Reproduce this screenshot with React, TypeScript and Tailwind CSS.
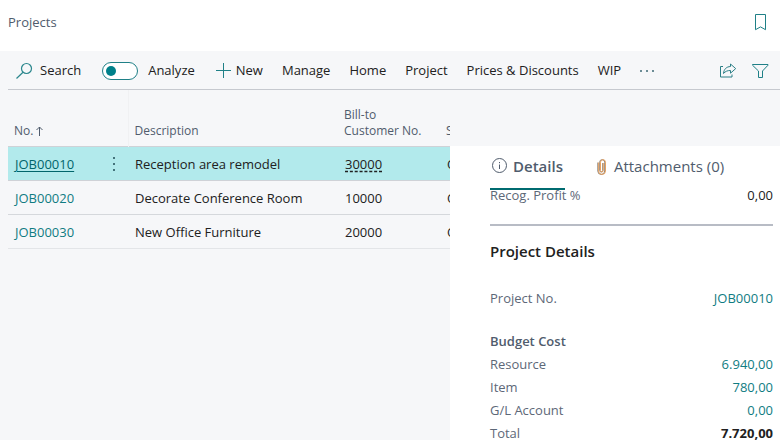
import React from "react";

const projects = [
  { no: "JOB00010", description: "Reception area remodel", customer: "30000", status: "Open" },
  { no: "JOB00020", description: "Decorate Conference Room", customer: "10000", status: "Open" },
  { no: "JOB00030", description: "New Office Furniture", customer: "20000", status: "Open" },
];

const menus = ["Manage", "Home", "Project", "Prices & Discounts", "WIP"];

const budget = [
  { label: "Resource", value: "6.940,00" },
  { label: "Item", value: "780,00" },
  { label: "G/L Account", value: "0,00" },
];

function SearchIcon() {
  return (
    <svg width="18" height="18" viewBox="0 0 18 18" fill="none" stroke="#2b878d" aria-hidden="true">
      <circle cx="10.500" cy="6.500" r="5" strokeWidth="1.2" />
      <path d="M7 10.200.500 16.500" strokeWidth="1.2" />
    </svg>
  );
}

function PlusIcon() {
  return (
    <svg width="16" height="16" viewBox="0 0 16 16" fill="none" stroke="#1f8087" aria-hidden="true">
      <path d="M0 7.500h15M7.500 0v15" />
    </svg>
  );
}

function BookmarkIcon() {
  return (
    <svg width="12" height="17" viewBox="0 0 12 17" fill="none" stroke="#1f8087" aria-hidden="true">
      <path d="M.5.5h10v15.200L5.500 12.900.500 15.700z" />
    </svg>
  );
}

function ShareIcon() {
  return (
    <svg width="17" height="16" viewBox="0 0 17 16" fill="none" stroke="#2b7f86" strokeLinejoin="round" aria-hidden="true">
      <path d="M3 3.500H.5v10.500h11.500V11.500" />
      <path d="M10.500 1v2.500C6.500 3.700 4 6 3.500 10.500c2-2.300 4-3 7-3v2.700L15.700 5.600z" />
    </svg>
  );
}

function FilterIcon() {
  return (
    <svg width="17" height="16" viewBox="0 0 17 16" fill="none" stroke="#1f8087" aria-hidden="true">
      <path d="M.5 1.500h15.500v.700L10.500 8v6.500h-4V8L.5 2.200z" />
    </svg>
  );
}

function InfoIcon() {
  return (
    <svg width="16" height="16" viewBox="0 0 16 16" fill="none" stroke="#505c6d" aria-hidden="true">
      <circle cx="7.500" cy="7.500" r="7" />
      <path d="M7.500 6.500V11M7.500 4v1.200" />
    </svg>
  );
}

function ClipIcon() {
  return (
    <svg width="10" height="16" viewBox="0 0 10 16" fill="none" aria-hidden="true">
      <path d="M.8 3.500v8.500a3.400 3.400 0 0 0 6.900 0V3.200a2.500 2.500 0 0 0-5 0v8.300a1.500 1.500 0 0 0 3 0V4" stroke="#8d8378" />
      <path d="M1.600 3.500v8.500a3 3 0 0 0 6.900 0V3.200a2.500 2.500 0 0 0-5 0v8.300a1.300 1.300 0 0 0 2.800 0V4" stroke="#e79a52" strokeWidth=".9" />
    </svg>
  );
}

function SortIcon() {
  return (
    <svg width="7" height="10" viewBox="0 0 7 10" fill="none" stroke="#505c6d" aria-hidden="true">
      <path d="M3.500 10V1M.5 4l3-3 3 3" />
    </svg>
  );
}

export default function App() {
  return (
    <div className="flex h-screen flex-col overflow-hidden bg-[#f6f7f9] font-['Open_Sans','Noto_Sans',sans-serif] text-[13px] text-[#212121]">
      <header className="flex h-[51px] shrink-0 items-center justify-between bg-white pr-[13px] pb-[6px] pl-2">
        <h1 className="text-[#505c6d]">Projects</h1>
        <button type="button" aria-label="Bookmark">
          <BookmarkIcon />
        </button>
      </header>

      <div className="shrink-0 pl-2">
        <div className="flex h-[39px] items-center border-b border-[#c6c9cf] pt-[2px] pr-[11px] pl-2">
          <button type="button" className="flex items-center gap-[6px]">
            <SearchIcon />
            Search
          </button>
          <label className="ml-[21px] flex items-center gap-[10px]">
            <input
              type="checkbox"
              role="switch"
              className="h-[18px] w-9 appearance-none rounded-full border border-[#1f8087] bg-white p-[3px] before:block before:size-[10px] before:rounded-full before:bg-[#00808a] checked:before:ml-[18px]"
            />
            Analyze
          </label>
          <button type="button" className="ml-[21px] flex items-center gap-1">
            <PlusIcon />
            New
          </button>
          <nav className="ml-[19px] flex items-center gap-[19px] whitespace-nowrap">
            {menus.map((menu) => (
              <button type="button" key={menu}>
                {menu}
              </button>
            ))}
            <button type="button" aria-label="More options" className="flex gap-1">
              <span className="size-[2px] bg-[#6b8c95]" />
              <span className="size-[2px] bg-[#6b8c95]" />
              <span className="size-[2px] bg-[#6b8c95]" />
            </button>
          </nav>
          <div className="ml-auto flex items-center gap-[15px]">
            <button type="button" aria-label="Share">
              <ShareIcon />
            </button>
            <button type="button" aria-label="Filter">
              <FilterIcon />
            </button>
          </div>
        </div>
      </div>

      <div className="flex min-h-0 flex-1">
        <main className="min-w-0 flex-1 overflow-hidden pl-2">
          <table className="w-[560px] table-fixed border-collapse text-left">
            <colgroup>
              <col className="w-[92px]" />
              <col className="w-[28px]" />
              <col className="w-[210px]" />
              <col className="w-[102px]" />
              <col />
            </colgroup>
            <thead>
              <tr className="h-[56px] border-b border-[#cfd2d7] align-bottom text-xs leading-4 text-[#505c6d]">
                <th scope="col" className="px-[6px] pb-[7px] font-normal">
                  <span className="flex items-center gap-[3px]">
                    No. <SortIcon />
                  </span>
                </th>
                <th scope="col" aria-label="Row actions" className="border-r border-[#f0f1f3]" />
                <th scope="col" className="px-[6px] pb-[7px] font-normal">Description</th>
                <th scope="col" className="px-[6px] pb-[7px] font-normal whitespace-nowrap">
                  Bill-to
                  <br />
                  Customer No.
                </th>
                <th scope="col" className="px-[6px] pb-[7px] font-normal">Status</th>
              </tr>
            </thead>
            <tbody>
              {projects.map((project, index) => {
                const selected = index === 0;
                return (
                  <tr
                    key={project.no}
                    className={
                      selected
                        ? "h-[34px] border-b border-[#cfd2d7] bg-[#b2eaec]"
                        : "h-[34px] border-b border-[#d5d8dc] last:border-[#e3e5e8]"
                    }
                  >
                    <td className="px-[7px] pt-[3px]">
                      <a
                        href="#project"
                        className={selected ? "text-[#00656b] underline underline-offset-2" : "text-[#107c82]"}
                      >
                        {project.no}
                      </a>
                    </td>
                    <td className="pt-[2px]">
                      {selected && (
                        <button type="button" aria-label="Show more options" className="mx-auto flex w-[2px] flex-col gap-1">
                          <span className="size-[2px] bg-[#44737b]" />
                          <span className="size-[2px] bg-[#44737b]" />
                          <span className="size-[2px] bg-[#44737b]" />
                        </button>
                      )}
                    </td>
                    <td className="px-[7px] pt-[3px] whitespace-nowrap">{project.description}</td>
                    <td className="px-[7px] pt-[3px]">
                      <span className={selected ? "underline decoration-dashed underline-offset-2" : ""}>
                        {project.customer}
                      </span>
                    </td>
                    <td className="px-[7px] pt-[3px]">{project.status}</td>
                  </tr>
                );
              })}
            </tbody>
          </table>
        </main>

        <aside className="mt-14 w-[330px] shrink-0 bg-white pr-[7px] pl-10">
          <div role="tablist" className="flex h-11 gap-8 text-[15px] text-[#505c6d]">
            <button type="button" role="tab" aria-selected="true" className="flex items-center gap-[5px] border-b-2 border-[#006b70] px-[2px] pb-[2px] font-semibold">
              <InfoIcon />
              Details
            </button>
            <button type="button" role="tab" aria-selected="false" className="flex items-center gap-[7px] pb-[3px]">
              <ClipIcon />
              Attachments (0)
            </button>
          </div>
          <dl className="flex justify-between leading-[10px]">
            <dt className="text-[#5d6878]">Recog. Profit %</dt>
            <dd>0,00</dd>
          </dl>
          <section className="mt-6 border-t-2 border-[#b8bcc5] pt-[13px]">
            <h2 className="text-[15px] leading-6 font-semibold">Project Details</h2>
            <dl className="mt-[23px] flex justify-between leading-6">
              <dt className="text-[#5d6878]">Project No.</dt>
              <dd>
                <a href="#project" className="text-[#107c82]">JOB00010</a>
              </dd>
            </dl>
            <h3 className="mt-5 leading-[23px] font-semibold text-[#505c6d]">Budget Cost</h3>
            <dl className="leading-[23px]">
              {budget.map((entry) => (
                <div key={entry.label} className="flex justify-between">
                  <dt className="text-[#5d6878]">{entry.label}</dt>
                  <dd>
                    <a href="#entries" className="text-[#107c82]">{entry.value}</a>
                  </dd>
                </div>
              ))}
              <div className="flex justify-between">
                <dt className="text-[#5d6878]">Total</dt>
                <dd className="font-bold">7.720,00</dd>
              </div>
            </dl>
          </section>
        </aside>
      </div>
    </div>
  );
}
